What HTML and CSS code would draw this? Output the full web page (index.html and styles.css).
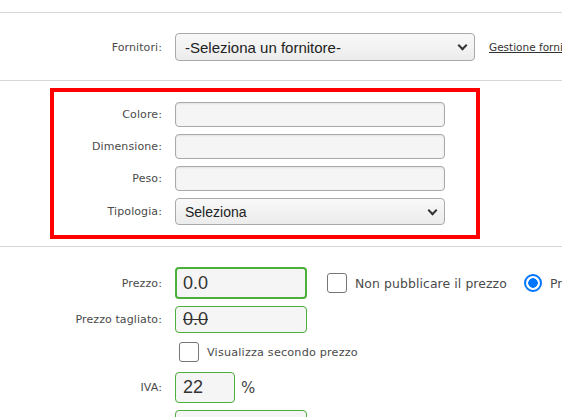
FILE: index.html
```html
<!DOCTYPE html>
<html lang="it">
  <head>
    <meta charset="UTF-8" />
    <meta name="viewport" content="width=device-width, initial-scale=1.0" />
    <title>Prodotto</title>
    <link rel="stylesheet" href="styles.css">
  </head>
  <body>
    <div class="page">
      <div class="section top">
        <div class="row">
          <label class="lbl" for="fornitore">Fornitori:</label>
          <div class="field">
            <div class="select wide" id="fornitore">-Seleziona un fornitore-<span class="chev"></span></div>
            <a class="link" href="#">Gestione fornitori</a>
          </div>
        </div>
      </div>

      <div class="highlight">
        <div class="row">
          <label class="lbl">Colore:</label>
          <div class="input attr"></div>
        </div>
        <div class="row">
          <label class="lbl">Dimensione:</label>
          <div class="input attr"></div>
        </div>
        <div class="row">
          <label class="lbl">Peso:</label>
          <div class="input attr"></div>
        </div>
        <div class="row">
          <label class="lbl">Tipologia:</label>
          <div class="select attr small">Seleziona<span class="chev"></span></div>
        </div>
      </div>

      <div class="section prices">
        <div class="row">
          <label class="lbl">Prezzo:</label>
          <div class="field">
            <div class="input green strong price">0.0</div>
            <span class="check"></span>
            <span class="opt big">Non pubblicare il prezzo</span>
            <span class="radio"></span>
            <span class="opt big">Prezzo</span>
          </div>
        </div>
        <div class="row">
          <label class="lbl">Prezzo tagliato:</label>
          <div class="input green price cut"><s>0.0</s></div>
        </div>
        <div class="row">
          <span></span>
          <div class="field second">
            <span class="check"></span>
            <span class="opt">Visualizza secondo prezzo</span>
          </div>
        </div>
        <div class="row">
          <label class="lbl">IVA:</label>
          <div class="field">
            <div class="input green iva">22</div>
            <span class="pct">%</span>
          </div>
        </div>
        <div class="row">
          <span></span>
          <div class="input green price"></div>
        </div>
      </div>
    </div>
  </body>
</html>
```

FILE: styles.css
```css
body {
  margin: 0;
  background-color: white;
  font-family: "DejaVu Sans", Verdana, sans-serif;
  color: #444;
  overflow: hidden;
}

.page {
  width: 562px;
  padding-top: 12px;
  overflow: hidden;
}

.section {
  border-top: 1px solid #d6d6d6;
}
.top {
  padding: 20px 0 19px;
  border-bottom: 1px solid #d6d6d6;
}

.row {
  display: grid;
  grid-template-columns: 162px 1fr;
  column-gap: 13px;
  align-items: center;
}

.lbl {
  text-align: right;
  font-size: 11px;
  letter-spacing: 0.1px;
  color: #4a4a4a;
}

.field {
  display: flex;
  align-items: center;
  white-space: nowrap;
}

.select,
.input {
  box-sizing: border-box;
  border: 1px solid #a9a9a9;
  border-radius: 4px;
  background-color: #f5f5f5;
  font-family: "Liberation Sans", Arial, sans-serif;
  color: #222;
}

.select {
  position: relative;
  display: flex;
  align-items: center;
  padding-left: 9px;
  background: linear-gradient(#f8f8f8, #ececec);
}
.select.wide {
  width: 300px;
  height: 28px;
  font-size: 15px;
}
.select.small {
  font-size: 14px;
}
.chev {
  position: absolute;
  right: 8px;
  top: 50%;
  width: 5px;
  height: 5px;
  margin-top: -5px;
  border-right: 2px solid #333;
  border-bottom: 2px solid #333;
  transform: rotate(45deg);
}

.link {
  margin-left: 14px;
  font-size: 10.5px;
  color: #333;
  text-decoration: underline;
}

/* blocco evidenziato */
.highlight {
  margin: 7px 82px 7px 50px;
  border: 4px solid #ff0000;
  padding: 10px 0;
  display: flex;
  flex-direction: column;
  gap: 7px;
}
.highlight .row {
  grid-template-columns: 108px 1fr;
}
.input.attr {
  width: 270px;
  height: 25px;
  box-shadow: inset 0 1px 2px rgba(0, 0, 0, 0.08);
}
.select.attr {
  width: 270px;
  height: 27px;
}

/* prezzi */
.prices {
  padding-top: 20px;
  display: flex;
  flex-direction: column;
  gap: 7px;
}
.input.green {
  border: 1px solid #4caf3a;
  display: flex;
  align-items: center;
  padding-left: 7px;
  font-size: 18px;
  color: #333;
}
.input.strong {
  border-width: 2px;
  padding-left: 6px;
  height: 32px;
}
.price {
  width: 132px;
  height: 27px;
}
.cut {
  font-size: 17px;
}
.iva {
  width: 60px;
  height: 31px;
}
.pct {
  margin-left: 6px;
  font-size: 15px;
  font-family: "DejaVu Sans", sans-serif;
}

.check {
  box-sizing: border-box;
  width: 20px;
  height: 20px;
  border: 1px solid #767676;
  border-radius: 3px;
  background-color: white;
}
.opt {
  margin-left: 8px;
  font-size: 11.2px;
  letter-spacing: 0.2px;
  color: #4a4a4a;
}
.opt.big {
  font-size: 12.4px;
  letter-spacing: 0.1px;
  margin-left: 8px;
}
.price + .check {
  margin-left: 20px;
}
.radio {
  box-sizing: border-box;
  width: 18px;
  height: 18px;
  margin-left: 17px;
  border: 2px solid #0075ff;
  border-radius: 50%;
  background: radial-gradient(circle, #0075ff 0 4.5px, white 5px);
}
.second {
  padding: 2px 0 3px 4px;
}
```
